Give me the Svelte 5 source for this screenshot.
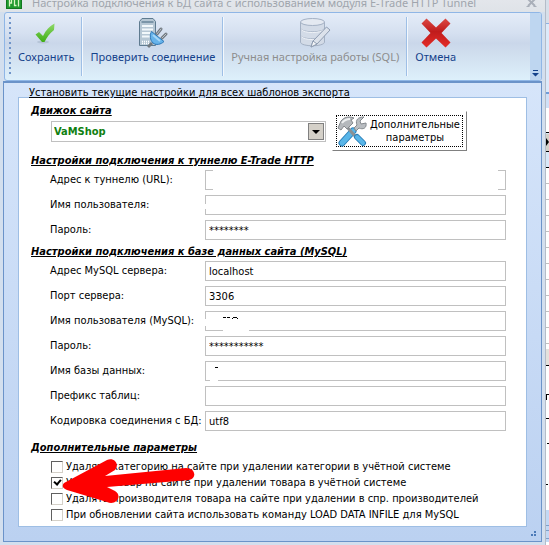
<script lang="ts">
  type Patch = { x: number; y: number; w: number; h: number; ink?: boolean };
  type Field = { id: string; label: string; value: string; wiped?: boolean; patches?: Patch[] };

  let engine = $state('VaMShop');

  let tunnel = $state<Field[]>([
    { id: 'url', label: 'Адрес к туннелю (URL):', value: '', wiped: true },
    { id: 'user', label: 'Имя пользователя:', value: '', patches: [{ x: 0, y: 9, w: 2, h: 5 }] },
    { id: 'pass', label: 'Пароль:', value: '********' }
  ]);

  let database = $state<Field[]>([
    { id: 'db-host', label: 'Адрес MySQL сервера:', value: 'localhost' },
    { id: 'db-port', label: 'Порт сервера:', value: '3306' },
    {
      id: 'db-user',
      label: 'Имя пользователя (MySQL):',
      value: '',
      patches: [
        { x: 0, y: 8, w: 2, h: 7 },
        { x: 18, y: 18, w: 26, h: 2 },
        { x: 18, y: 6, w: 3, h: 1, ink: true },
        { x: 22, y: 6, w: 3, h: 1, ink: true },
        { x: 28, y: 6, w: 4, h: 1, ink: true },
        { x: 27, y: 7, w: 1, h: 1, ink: true },
        { x: 32, y: 7, w: 1, h: 1, ink: true }
      ]
    },
    { id: 'db-pass', label: 'Пароль:', value: '***********' },
    {
      id: 'db-name',
      label: 'Имя базы данных:',
      value: '',
      patches: [
        { x: 5, y: 18, w: 8, h: 2 },
        { x: 10, y: 6, w: 3, h: 1, ink: true }
      ]
    },
    { id: 'db-prefix', label: 'Префикс таблиц:', value: '' },
    { id: 'db-charset', label: 'Кодировка соединения с БД:', value: 'utf8' }
  ]);

  let options = $state([
    { label: 'Удалять категорию на сайте при удалении категории в учётной системе', checked: false },
    { label: 'Удалять товар на сайте при удалении товара в учётной системе', checked: true },
    { label: 'Удалять производителя товара на сайте при удалении в спр. производителей', checked: false },
    { label: 'При обновлении сайта использовать команду LOAD DATA INFILE для MySQL', checked: false }
  ]);
</script>

{#snippet fieldRow(field: Field)}
  <div class="field">
    <label for={field.id}>{field.label}</label>
    <div class="input-wrap" class:wiped={field.wiped}>
      <input id={field.id} type="text" bind:value={field.value} />
      {#each field.patches ?? [] as p}
        <span
          class="patch"
          class:ink={p.ink}
          style="left: {p.x}px; top: {p.y}px; width: {p.w}px; height: {p.h}px"
        ></span>
      {/each}
    </div>
  </div>
{/snippet}

<div class="screen">
  <main class="dialog">
    <header class="titlebar">
      <svg class="app-icon" width="16" height="10" viewBox="0 0 16 10">
        <rect width="16" height="9" fill="#1f9a2e" />
        <rect x="0.5" y="-1" width="15" height="9.5" fill="none" stroke="#12771f" />
        <path d="M3.5 6.500V0M3.500 3h2V0M8.500 0v5.500h2M12.500 0v6.500" fill="none" stroke="#d9f5c4" stroke-width="1.300" />
      </svg>
      <h1>Настройка подключения к БД сайта с использованием модуля E-Trade HTTP Tunnel</h1>
      <button class="close" aria-label="Закрыть">
        <svg width="11" height="9" viewBox="0 0 11 9">
          <path d="M2 -1L9 6M9 -1L2 6" stroke="#a9afb9" stroke-width="2" />
          <path d="M0.500 6.500h3M7.500 6.500h3" stroke="#a9afb9" />
        </svg>
      </button>
    </header>

    <nav class="toolbar">
      <span class="grip"></span>
      <button class="tool">
        <svg width="32" height="32" viewBox="0 0 32 32">
          <defs>
            <linearGradient id="check" x1="0" y1="0" x2="0" y2="1">
              <stop offset="0" stop-color="#8fd96a" />
              <stop offset="1" stop-color="#3fae14" />
            </linearGradient>
          </defs>
          <ellipse cx="13" cy="25" rx="6" ry="1.500" fill="#9fb0c4" opacity="0.5" />
          <path d="M5.500 17.500L9 15l4 4C16 13 19.500 9 24.500 6.500L24 13C20 16 17 20 14.500 25H12Z" fill="url(#check)" />
        </svg>
        <span>Сохранить</span>
      </button>
      <span class="divider"></span>
      <button class="tool">
        <svg width="32" height="32" viewBox="0 0 32 32">
          <path d="M2.500 4.500L5 1.500h11l2.500 3v24h-16Z" fill="#b6c7d4" stroke="#5f7b90" />
          <path d="M4.500 4h12v2h-12z" fill="#7b95a8" />
          <path d="M5 9h11M5 12.500h11M5 16h10M5 19.500h8" stroke="#f2f8fb" stroke-width="2" />
          <path d="M5 24.500h8M5 26.500h7" stroke="#fff" stroke-width="1.500" stroke-dasharray="1 1" />
          <path d="M20 17l4-5M25 21l4-4" stroke="#707880" stroke-width="3" stroke-linecap="round" />
          <path d="M20 17l4-5M25 21l4-4" stroke="#bcc4ca" stroke-width="1" stroke-linecap="round" />
          <path d="M15 26l-4 4" stroke="#717980" stroke-width="3" />
          <path d="M14.500 14.500L27 24.500C24 27.500 19 28.500 16 26C13 23 12.500 18 14.500 14.500Z" fill="#67b3ea" stroke="#2e78b7" />
          <path d="M16 18L23 24" stroke="#a6d7f7" stroke-width="2" />
        </svg>
        <span>Проверить соединение</span>
      </button>
      <span class="divider"></span>
      <button class="tool" disabled>
        <svg width="32" height="32" viewBox="0 0 32 32">
          <path d="M1.500 5v20c0 5 24 5 24 0V5" fill="#d3dbe7" stroke="#a4b1c4" />
          <ellipse cx="13.500" cy="5" rx="12" ry="3.500" fill="#e4e9f1" stroke="#a4b1c4" />
          <path d="M1.500 11c0 5 24 5 24 0M1.500 18c0 5 24 5 24 0" fill="none" stroke="#a4b1c4" />
          <path d="M2.500 12.500c2 4 20 4 22 0M2.500 19.500c2 4 20 4 22 0" fill="none" stroke="#f0f3f8" />
          <path d="M12 30l2-6L27.500 10l3.500 3L18 27Z" fill="#dce2eb" stroke="#8e9cb1" />
          <path d="M12 30l2-6 4 3Z" fill="#f3f5f8" stroke="#8e9cb1" />
        </svg>
        <span>Ручная настройка работы (SQL)</span>
      </button>
      <span class="divider"></span>
      <button class="tool">
        <svg width="32" height="32" viewBox="0 0 32 32">
          <defs>
            <linearGradient id="cross" x1="0" y1="0" x2="0" y2="1">
              <stop offset="0" stop-color="#dc4a44" />
              <stop offset="0.450" stop-color="#c01c1c" />
              <stop offset="1" stop-color="#e42c28" />
            </linearGradient>
          </defs>
          <path d="M6.500 1.500L16 10.500L25.500 1.500L30.500 6.500L21.500 16L30.500 25.500L25.500 30.500L16 21.500L6.500 30.500L1.500 25.500L10.500 16L1.500 6.500Z" fill="url(#cross)" />
        </svg>
        <span>Отмена</span>
      </button>
      <button class="overflow" aria-label="Ещё">
        <svg width="7" height="7" viewBox="0 0 7 7">
          <path d="M1 0h5v1H1zM0 3h7L3.500 6.500z" fill="#15428b" />
        </svg>
      </button>
    </nav>

    <div class="body">
      <a class="apply-all" href="#all">Установить текущие настройки для всех шаблонов экспорта</a>

      <form class="panel">
        <div class="engine">
          <div class="engine-main">
            <h2><label for="engine">Движок сайта</label></h2>
            <div class="combo">
              <select id="engine" bind:value={engine}>
                <option>VaMShop</option>
              </select>
              <span class="combo-arrow"></span>
            </div>
          </div>
          <button type="button" class="more">
            <span class="more-inner">
              <svg width="31" height="31" viewBox="0 0 31 31">
                <path d="M5 27L16 15" stroke="#2a7fb8" stroke-width="7" stroke-linecap="round" />
                <path d="M5 27L16 15" stroke="#58b5e8" stroke-width="5" stroke-linecap="round" />
                <path d="M17 12l3-3C18 4 21 1 27 1l-4 4 1 3 5-1C30 12 26 14 22 12l-3 3Z" fill="#b9bdc1" stroke="#858a8f" />
                <path d="M10 11l8 9" stroke="#8b9094" stroke-width="3" />
                <path d="M20 21l6 6" stroke="#2a7fb8" stroke-width="6" stroke-linecap="round" />
                <path d="M20 21l6 6" stroke="#58b5e8" stroke-width="4" stroke-linecap="round" />
                <path d="M1 12L4 5C7 1 12 0 17 2l-3 2 2 3-6 6-3-3-3 4Z" fill="#b4b8bc" stroke="#85898d" />
                <path d="M5 7C8 3 11 3 13 3" fill="none" stroke="#eef0f1" stroke-width="2" />
              </svg>
              <span>Дополнительные параметры</span>
            </span>
          </button>
        </div>

        <h2>Настройки подключения к туннелю E-Trade HTTP</h2>
        <div class="fields">
          {#each tunnel as field (field.id)}
            {@render fieldRow(field)}
          {/each}
        </div>

        <h2>Настройки подключения к базе данных сайта (MySQL)</h2>
        <div class="fields">
          {#each database as field (field.id)}
            {@render fieldRow(field)}
          {/each}
        </div>

        <h2 class="extra">Дополнительные параметры</h2>
        <div class="options">
          {#each options as option}
            <label class="option">
              <input type="checkbox" bind:checked={option.checked} />
              <span>{option.label}</span>
            </label>
          {/each}
          <svg class="pointer" width="134" height="48" viewBox="0 0 134 48">
            <path
              d="M3 24L46 1C53 -2 59 5 54 11L44 17L125 9C135 9 136 20 128 21L46 28L54 32C62 37 55 47 46 43L6 31C1 29 1 26 3 24Z"
              fill="#fe0000"
            />
          </svg>
        </div>
      </form>

      <svg class="size-grip" width="6" height="6" viewBox="0 0 6 6">
        <path d="M3 0h2v2H3zM0 3h2v2H0zM3 3h2v2H3z" fill="#4b7ab8" />
      </svg>
    </div>
  </main>

  <aside class="behind">
    <svg width="3" height="545" viewBox="0 0 3 545">
      <rect width="3" height="545" fill="#fff" />
      <rect width="3" height="23" fill="#d7dfea" />
      <rect y="23" width="3" height="70" fill="#dceafa" />
      <rect y="23" width="3" height="1" fill="#8db2e3" />
      <rect y="92" width="3" height="2" fill="#6f9dd9" />
      <rect y="94" width="3" height="14" fill="#cfe0f7" />
      <rect y="132" width="3" height="35" fill="#d8e8f8" />
      <rect y="132" width="3" height="1" fill="#000" />
      <rect y="134" width="3" height="17" fill="#d4d0c8" />
      <path d="M0 138l3 4-3 4z" />
      <path d="M0 151.500h3M0 167.500h3M0 365.500h3M0 394.500h3M0 418.500h3M0.500 394v6M1 443.500h2M0 484.500h2" stroke="#000" />
      <path d="M0 183.500h3M0 199.500h3M0 215.500h3M0 231.500h3M0 247.500h3M0 263.500h3M0 279.500h3M0 295.500h3M0 311.500h3M0 327.500h3M0 343.500h3" stroke="#c0c0c0" />
      <rect y="349" width="3" height="16" fill="#e4e1dc" />
      <rect y="510" width="3" height="32" fill="#c3d8f4" />
      <path d="M0 525.500h3M0 530.500h3M0 538.500h3" stroke="#7f9fc8" />
    </svg>
  </aside>
</div>

<style>
  :global(body) {
    background: #d3dfee;
  }
  .screen {
    display: flex;
    overflow: hidden;
    font-family: "DejaVu Sans Condensed", "DejaVu Sans", sans-serif;
    font-size: 11px;
    line-height: 14px;
    color: #000;
  }
  button, input, select {
    font: inherit;
    color: inherit;
  }
  .dialog {
    flex: 1;
    min-width: 0;
    padding: 0 3px 3px;
    background: #d3dfee;
    border-right: 1px solid #b4bcc8;
  }

  /* Title bar */
  .titlebar {
    display: flex;
    align-items: flex-start;
    height: 12px;
    padding: 0 8px 0 3px;
    margin: 0 -3px;
    background: linear-gradient(#e3e6eb, #dfe3e8);
  }
  .app-icon {
    flex: none;
    margin-left: 3px;
  }
  h1 {
    flex: 1;
    margin: -5px 0 0 10px;
    font: 11px/16px "Noto Sans", sans-serif;
    color: #a0a5ad;
    white-space: nowrap;
  }
  .close {
    display: flex;
    padding: 0;
    border: none;
    background: none;
  }

  /* Toolbar */
  .toolbar {
    display: flex;
    height: 67px;
    margin-left: 1px;
    border: 1px solid #8fb6e6;
    border-radius: 3px;
    overflow: hidden;
    background: linear-gradient(#e4ecf8 0, #d5e0f0 30%, #cad7ea 45%, #d0deee 60%, #ddf0fb 100%);
  }
  .grip {
    width: 2px;
    margin: 4px 0 4px 4px;
    background: repeating-linear-gradient(#6f94c9 0 2px, transparent 2px 5px);
  }
  .tool {
    display: flex;
    flex-direction: column;
    align-items: center;
    padding: 4px 7px;
    border: none;
    background: none;
    font: 11px/16px "Noto Sans", sans-serif;
    color: #15428b;
    white-space: nowrap;
    cursor: pointer;
  }
  .tool:disabled {
    color: #8d8d8d;
    cursor: default;
  }
  .divider {
    width: 1px;
    margin: 4px 0;
    background: #9ebfe6;
    border-right: 1px solid #f3f8fd;
  }
  .overflow {
    display: flex;
    align-items: flex-end;
    justify-content: center;
    width: 11px;
    margin-left: auto;
    padding: 0 0 3px;
    border: none;
    background: #bed6f0;
  }

  /* Client area */
  .body {
    position: relative;
    padding: 3px 14px 14px;
    border: 1px solid #6b93c9;
    border-top: 2px solid #6b93c9;
    background: linear-gradient(#d6e5fa, #bbd1f1);
  }
  .apply-all {
    display: block;
    height: 11px;
    margin-left: 11px;
    color: #000;
    white-space: nowrap;
  }
  .panel {
    padding: 6px 20px 3px 12px;
    border: 1px solid #9ebee4;
    background: #fff;
  }
  h2 {
    width: max-content;
    margin: 0;
    font-size: 11px;
    line-height: 14px;
    font-weight: bold;
    font-style: italic;
    text-decoration: underline;
    white-space: nowrap;
  }
  .engine {
    display: flex;
    align-items: flex-end;
    gap: 6px;
    margin-bottom: 3px;
    padding-right: 39px;
  }
  .engine-main {
    flex: 1;
    align-self: flex-start;
  }
  .combo {
    position: relative;
    margin: 3px 0 0 20px;
  }
  .combo select {
    display: block;
    width: 100%;
    height: 21px;
    padding: 0 2px;
    border: 1px solid #c0c0c0;
    border-radius: 0;
    appearance: none;
    background: #fff;
    color: #108010;
    font-weight: bold;
  }
  .combo-arrow {
    position: absolute;
    top: 2px;
    right: 2px;
    width: 14px;
    height: 15px;
    border: 1px solid #808080;
    background: #d4d0c8;
    pointer-events: none;
  }
  .combo-arrow::after {
    content: "";
    position: absolute;
    top: 6px;
    left: 3px;
    border: 4px solid transparent;
    border-top-color: #000;
    border-bottom: 0;
  }
  .more {
    width: 135px;
    height: 40px;
    margin-top: 7px;
    padding: 3px;
    border: 1px solid #808080;
    border-top-color: #fff;
    border-left-color: #fff;
    background: #fff;
  }
  .more-inner {
    display: flex;
    align-items: center;
    height: 32px;
    box-sizing: border-box;
    border: 1px dotted #000;
    line-height: 13px;
  }
  .more-inner svg {
    flex: none;
  }
  .more-inner span {
    flex: 1;
  }

  .fields {
    display: grid;
    gap: 5px;
    margin: 2px 0 5px 19px;
  }
  .field {
    display: grid;
    grid-template-columns: 155px 1fr;
    align-items: center;
    white-space: nowrap;
  }
  .input-wrap {
    position: relative;
  }
  .input-wrap input {
    display: block;
    box-sizing: border-box;
    width: 100%;
    height: 20px;
    padding: 0 3px;
    border: 1px solid #c0c0c0;
    border-radius: 0;
    background: #fff;
    outline: none;
  }
  /* white band across the middle of the address box */
  .wiped::after {
    content: "";
    position: absolute;
    top: 0;
    bottom: 0;
    left: 8px;
    right: 8px;
    background: #fff;
  }
  .patch {
    position: absolute;
    background: #fff;
  }
  .patch.ink {
    background: #000;
  }

  /* Checkboxes */
  .extra {
    margin-top: 10px;
  }
  .options {
    position: relative;
    display: grid;
    margin: 4px 0 0 20px;
  }
  .option {
    display: flex;
    align-items: center;
    gap: 3px;
    height: 16px;
    white-space: nowrap;
  }
  .option input {
    flex: none;
    width: 12px;
    height: 12px;
    margin: 0;
    border: 1px solid #d4d0c8;
    border-top-color: #606060;
    border-left-color: #606060;
    appearance: none;
    background: #fff;
  }
  .option input:checked::after {
    content: "";
    display: block;
    width: 3px;
    height: 5px;
    margin: 0 0 0 3px;
    border: solid #000;
    border-width: 0 2px 2px 0;
    transform: rotate(40deg);
  }
  .pointer {
    position: absolute;
    top: 0;
    left: 10px;
    pointer-events: none;
  }
  .size-grip {
    position: absolute;
    right: 4px;
    bottom: 4px;
  }

  .behind {
    flex: none;
    width: 3px;
    overflow: hidden;
    background: #fff;
  }
  .behind svg {
    display: block;
  }
</style>
